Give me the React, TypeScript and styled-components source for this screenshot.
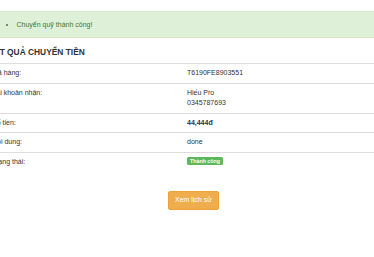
import React from 'react'
import styled, { createGlobalStyle } from 'styled-components'

const GlobalStyle = createGlobalStyle`
    body {
        margin: 0;
        overflow: hidden;
        background: #fff;
        color: #333;
        font-family: 'Liberation Sans', Arial, Helvetica, sans-serif;
        font-size: 7px;
        line-height: 10px;
    }
`

const Page = styled.div`
    width: 411px;
    margin-left: -12px;
    padding-top: 11px;
`

const Alert = styled.div`
    background: #dff0d8;
    border: 1px solid #d6e9c6;
    border-radius: 2px;
    color: #3c763d;
    padding: 7.5px 7.5px;
    ul {
        margin: 0;
        padding-left: 20px;
    }
`

const Title = styled.h4`
    margin: 9px 0 6px;
    font-size: 8.4px;
    line-height: 10px;
    font-weight: 700;
    text-transform: uppercase;
`

const Table = styled.table`
    width: 100%;
    border-collapse: collapse;
    line-height: 10.5px;
    td {
        padding: 4px;
        border-top: 1px solid #ddd;
        vertical-align: top;
    }
`

const Label = styled.td`
    width: 187px;
`

const Value = styled.td<{ $bold?: boolean }>`
    font-weight: ${(p) => (p.$bold ? 700 : 400)};
`

const Badge = styled.span`
    display: inline-block;
    background: #5cb85c;
    color: #fff;
    font-size: 5.3px;
    line-height: 6px;
    font-weight: 700;
    padding: 1px 3px 1.3px;
    border-radius: 1.5px;
    vertical-align: 1px;
`

const Actions = styled.div`
    display: flex;
    justify-content: center;
    margin-top: 20px;
`

const Button = styled.button`
    font-family: inherit;
    font-size: 7px;
    line-height: 10px;
    color: #fff;
    background: #f0ad4e;
    border: 0.5px solid #eea236;
    border-radius: 2px;
    padding: 3.4px 6.5px;
    cursor: pointer;
`

const rows = [
    { label: 'Mã hàng:', value: ['T6190FE8903551'] },
    { label: 'Tài khoản nhận:', value: ['Hiếu Pro', '0345787693'] },
    { label: 'Số tiền:', value: ['44,444đ'], bold: true },
    { label: 'Nội dung:', value: ['done'] },
]

export default function App() {
    return (
        <>
            <GlobalStyle />
            <Page>
                <Alert>
                    <ul>
                        <li>Chuyển quỹ thành công!</li>
                    </ul>
                </Alert>
                <Title>Kết quả chuyển tiền</Title>
                <Table>
                    <tbody>
                        {rows.map((row, i) => (
                            <tr key={i}>
                                <Label>{row.label}</Label>
                                <Value $bold={row.bold}>
                                    {row.value.map((line, j) => (
                                        <div key={j}>{line}</div>
                                    ))}
                                </Value>
                            </tr>
                        ))}
                        <tr>
                            <Label>Trạng thái:</Label>
                            <Value>
                                <Badge>Thành công</Badge>
                            </Value>
                        </tr>
                    </tbody>
                </Table>
                <Actions>
                    <Button>Xem lịch sử</Button>
                </Actions>
            </Page>
        </>
    )
}
